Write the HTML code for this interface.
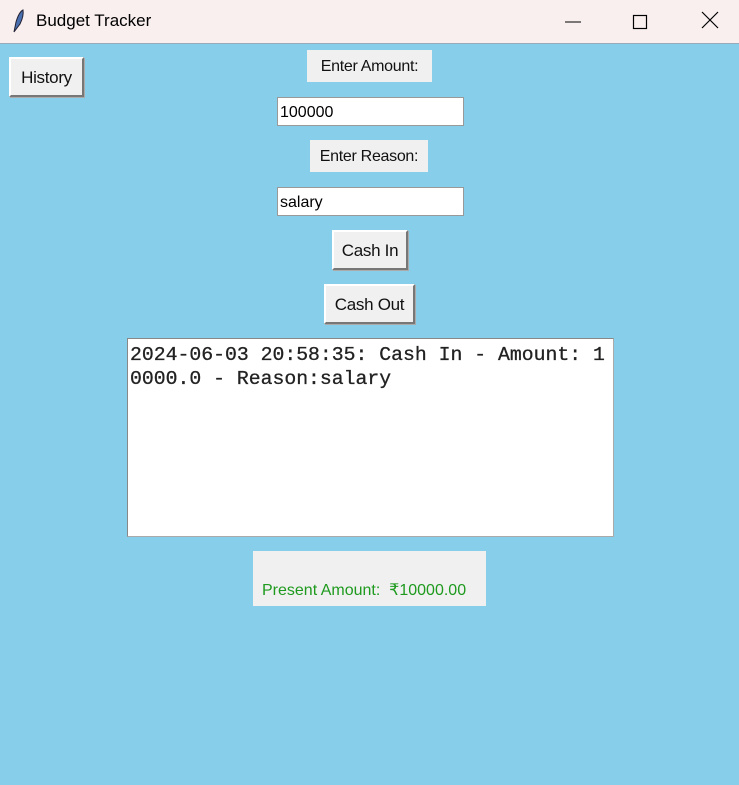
<!DOCTYPE html>
<html><head><meta charset="utf-8"><style>
body{margin:0;width:739px;height:785px;background:#87ceeb;font-family:"Liberation Sans",sans-serif;position:relative;overflow:hidden}
.title{position:absolute;left:0;top:0;width:739px;height:43px;background:#f9efee;border-bottom:1px solid #9ab}
.title span{position:absolute;left:36px;top:11px;font-size:17px;color:#000}
.abs{position:absolute;box-sizing:border-box}
.lbl{background:#f0f0f0;font-size:16px;color:#111;text-align:center;letter-spacing:-0.3px}
.btn{background:#f0f0f0;font-size:17px;color:#111;text-align:center;border:2px solid;border-color:#fff #777 #777 #fff;box-shadow:1px 1px 0 #aaa;letter-spacing:-0.3px}
.ent{background:#fff;border:1px solid #999;font-size:16px;padding-left:2px}
</style></head><body>
<div class="title">
<svg style="position:absolute;left:11px;top:8px" width="14" height="26" viewBox="0 0 14 26"><path d="M3 24 L5 14 Q8 4 12 2 Q13 8 9 16 Q6 20 3 24Z" fill="#4a6fb0" stroke="#223" stroke-width="1"/></svg>
<span>Budget Tracker</span>
<svg style="position:absolute;left:563px;top:12px" width="20" height="20"><line x1="2" y1="10" x2="18" y2="10" stroke="#000"/></svg>
<svg style="position:absolute;left:630px;top:12px" width="20" height="20"><rect x="3.5" y="3.5" width="13" height="13" fill="none" stroke="#000" stroke-width="1.2"/></svg>
<svg style="position:absolute;left:700px;top:10px" width="20" height="20"><path d="M2 2L18 18M18 2L2 18" stroke="#000" stroke-width="1.2"/></svg>
</div>
<div class="abs btn" style="left:9px;top:57px;width:75px;height:40px;line-height:38px">History</div>
<div class="abs lbl" style="left:307px;top:50px;width:125px;height:32px;line-height:34px">Enter Amount:</div>
<div class="abs ent" style="left:277px;top:97px;width:187px;height:29px;line-height:29px">100000</div>
<div class="abs lbl" style="left:310px;top:140px;width:118px;height:32px;line-height:34px">Enter Reason:</div>
<div class="abs ent" style="left:277px;top:187px;width:187px;height:29px;line-height:29px">salary</div>
<div class="abs btn" style="left:332px;top:230px;width:76px;height:40px;line-height:38px">Cash In</div>
<div class="abs btn" style="left:324px;top:284px;width:91px;height:40px;line-height:38px">Cash Out</div>
<div class="abs" style="left:127px;top:338px;width:487px;height:199px;background:#fff;border:1px solid #aaa;border-left-color:#888;border-top-color:#888;font-family:'Liberation Mono',monospace;font-size:19.8px;line-height:24px;padding:4px 0 0 2px;color:#222;white-space:pre;-webkit-text-stroke:0.3px #222">2024-06-03 20:58:35: Cash In - Amount: 1
0000.0 - Reason:salary</div>
<div class="abs lbl" style="left:253px;top:551px;width:233px;height:55px;color:#1e9a1e;font-size:16px;padding-top:29px;letter-spacing:0;text-align:left;padding-left:9px">Present Amount:&nbsp; ₹10000.00</div>
</body></html>
